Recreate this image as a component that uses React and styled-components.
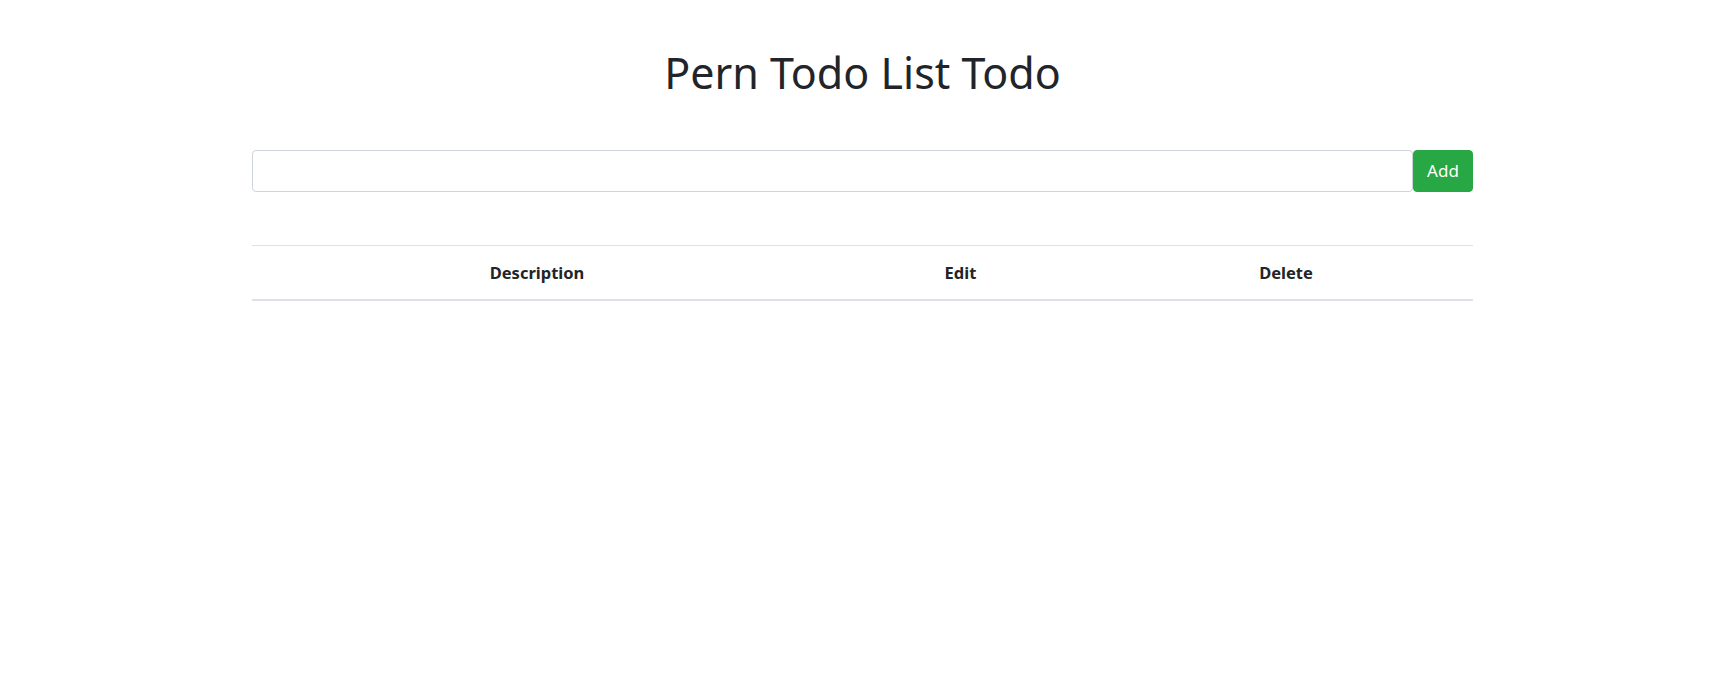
import styled, { createGlobalStyle } from 'styled-components';

const GlobalStyle = createGlobalStyle`
    body {
        margin: 0;
        padding-left: 12px;
        background: #fff;
        color: #212529;
        font-family: "Noto Sans", "Open Sans", sans-serif;
    }
`;

const Container = styled.div`
    width: 1221px;
    margin: 0 auto;
`;

const Title = styled.h1`
    margin: 0;
    padding-top: 47px;
    font-size: 43px;
    font-weight: 400;
    line-height: 1.2;
    text-align: center;
`;

const Form = styled.form`
    display: flex;
    margin-top: 51px;
`;

const Input = styled.input`
    flex: 1;
    height: 42px;
    box-sizing: border-box;
    padding: 6px 13px;
    border: 1px solid #ced4da;
    border-radius: 4px;
    font: inherit;
    font-size: 17px;
    outline: none;
`;

const AddButton = styled.button`
    width: 60px;
    height: 42px;
    border: 1px solid #28a745;
    border-radius: 4px;
    background: #28a745;
    color: #fff;
    font: inherit;
    font-size: 17px;
    cursor: pointer;
`;

const Table = styled.table`
    width: 100%;
    margin-top: 53px;
    border-collapse: collapse;
    table-layout: fixed;
`;

const Th = styled.th`
    box-sizing: border-box;
    width: ${p => p.$w}px;
    padding: 13px;
    line-height: 27px;
    font-size: 16.5px;
    font-weight: 700;
    text-align: center;
    border-top: 1px solid #dee2e6;
    border-bottom: 2px solid #dee2e6;
`;

export default function App() {
    return (
        <>
            <GlobalStyle />
            <Container>
                <Title>Pern Todo List Todo</Title>
                <Form onSubmit={e => e.preventDefault()}>
                    <Input type="text" />
                    <AddButton>Add</AddButton>
                </Form>
                <Table>
                    <thead>
                        <tr>
                            <Th $w={570}>Description</Th>
                            <Th $w={277}>Edit</Th>
                            <Th $w={374}>Delete</Th>
                        </tr>
                    </thead>
                    <tbody></tbody>
                </Table>
            </Container>
        </>
    );
}
